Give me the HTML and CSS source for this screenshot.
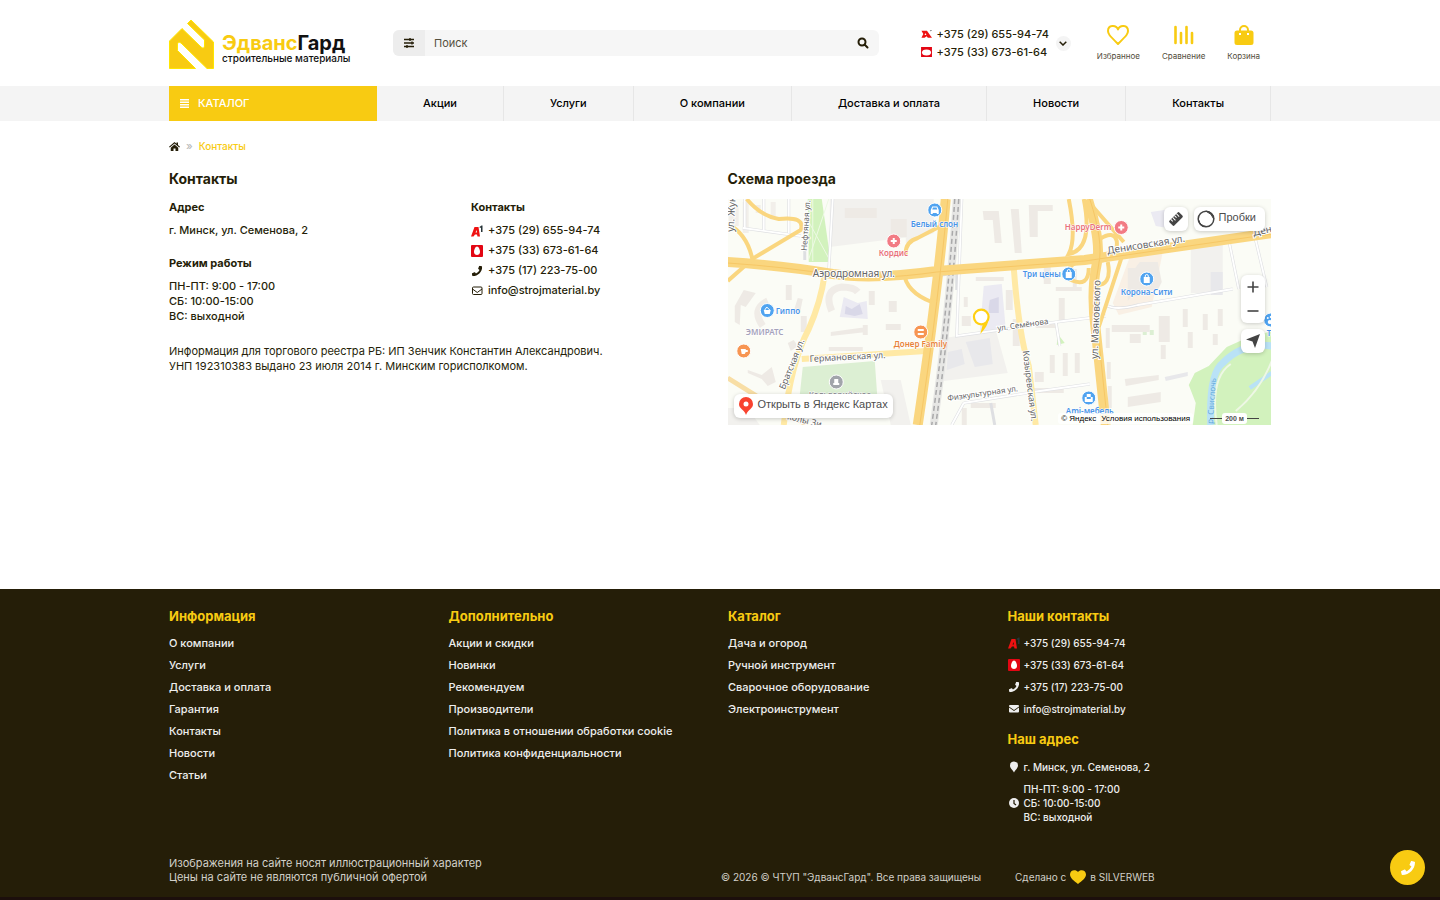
FILE: index.html
```html
<!DOCTYPE html>
<html lang="ru">
<head>
<meta charset="utf-8">
<meta name="viewport" content="width=device-width, initial-scale=1">
<title>Контакты — ЭдвансГард</title>
<link rel="stylesheet" href="styles.css">
</head>
<body>
<svg class="sprite" aria-hidden="true">
  <symbol id="phone" viewBox="0 0 512 512"><path d="M493 25l-104-24c-11-3-23 3-27 14l-48 112c-4 10-1 22 7 28l61 50a371 371 0 0 1-177 177l-50-61c-7-8-18-11-28-7L15 362c-11 4-17 16-14 27l24 104c2 11 12 19 23 19 256 0 464-207 464-464 0-11-8-21-19-23z"/></symbol>
  <symbol id="a1" viewBox="0 0 24 24"><path fill="#ee1111" fill-rule="evenodd" d="M7 4h8l3 19h-5l-1-4H8l-3 4H0L7 4zm4 6-2 5h3z"/><path class="a1-one" d="M17 4l4-3h2v13h-3V5l-2 1z"/></symbol>
  <symbol id="mts" viewBox="0 0 24 24"><rect width="24" height="24" rx="2" fill="#e30613"/><path fill="#fff" d="M12 3c3 0 6 6 6 11 0 4-3 6-6 6s-6-2-6-6c0-5 3-11 6-11z"/></symbol>
  <symbol id="bag" viewBox="0 0 20 20"><path d="M3 5.500h2V5a5 5 0 0 1 10 0v.5h2q2.500 0 2.500 2.500v9.500Q19.500 20 17 20H3Q.5 20 .5 17.500V8q0-2.500 2.500-2.500zm4 0h6V5a3 3 0 0 0-6 0zM5 8v2h2V8zm8 0v2h2V8z"/></symbol>
</svg>

<header class="header container">
  <a class="logo" href="#" aria-label="ЭдвансГард">
    <svg class="logo-mark" viewBox="0 0 45 50"><path fill="#f8cb12" stroke="#ffe600" d="M.5 22 13 9.500 32 28q3 2.500 3.500-1v-6L18.500 4.500 22 1l22.500 22v26.500h-6.500L12 24q-3-2-3.500 1v6.500l18 18H.5z"/></svg>
    <span class="logo-text"><span class="logo-name"><span>Эдванс</span>Гард</span><span class="logo-sub">строительные материалы</span></span>
  </a>
  <form class="search" role="search">
    <button class="search-filter" type="button" aria-label="Фильтр"><svg viewBox="0 0 12 12" fill="none" stroke="currentColor" stroke-width="1.400"><path d="M1 2.500h10M1 6h10M1 9.500h10M7 1v3M9 4.500v3M4 8v3"/></svg></button>
    <input type="search" placeholder="Поиск" aria-label="Поиск">
    <button class="search-go" type="submit" aria-label="Найти"><svg viewBox="0 0 12 12" fill="none" stroke="currentColor" stroke-width="2"><circle cx="5" cy="5" r="3.500"/><path d="m7.500 7.500 3 3" stroke-linecap="round"/></svg></button>
  </form>
  <div class="phones">
    <div class="phone-list">
      <a href="tel:+375296559474"><svg class="flat" viewBox="0 0 24 20"><path fill="#e11" fill-rule="evenodd" d="M1 3h12l5 7 6 8h-9l-3-3-4 3H1l4-8zM9 8l-1 4h4z"/><path fill="#444" d="m19 3 4-2v2l-2 1z"/></svg>+375 (29) 655-94-74</a>
      <a href="tel:+375336736164"><svg class="flat" viewBox="0 0 24 22"><rect width="24" height="22" fill="#e30613"/><ellipse cx="12" cy="12" rx="10" ry="6.500" fill="#fff"/></svg>+375 (33) 673-61-64</a>
    </div>
    <button class="phones-more" type="button" aria-label="Показать контакты"><svg viewBox="0 0 8 5" fill="none" stroke="currentColor" stroke-width="1.500"><path d="m.7.7 3.300 3.300L7.300.7"/></svg></button>
  </div>
  <nav class="tools" aria-label="Покупки">
    <a href="#"><svg viewBox="0 0 22 20" fill="none" stroke="#f8cb12" stroke-width="2"><path d="M11 4.500C9-.5 1-.2 1 6c0 3 1 4 10 13 9-9 10-10 10-13 0-6.200-8-6.500-10-1.500z" stroke-linejoin="round"/></svg>Избранное</a>
    <a href="#"><svg viewBox="0 0 22 20" fill="none" stroke="#f8cb12" stroke-width="2.600" stroke-linecap="round"><path d="M2.500 2v16M8 8v10M13.500 2v16M19 8v10"/></svg>Сравнение</a>
    <a href="#"><svg viewBox="0 0 20 20" fill="#f8cb12" fill-rule="evenodd"><use href="#bag"/></svg>Корзина</a>
  </nav>
</header>

<div class="menu-bar">
  <nav class="menu container" aria-label="Основное меню">
    <button class="catalog" type="button"><svg viewBox="0 0 9 9" fill="#fff"><path d="M0 0h9v1.500H0zM0 2.500h9v1.500H0zM0 5h9v1.500H0zM0 7.500h9v1.500H0z"/></svg>КАТАЛОГ</button>
    <a href="#">Акции</a><a href="#">Услуги</a><a href="#">О компании</a><a href="#">Доставка и оплата</a><a href="#">Новости</a><a href="#">Контакты</a>
  </nav>
</div>

<main class="container">
  <nav class="crumbs" aria-label="Навигация">
    <a href="#" aria-label="Главная"><svg viewBox="0 0 22 18" fill="#251e08"><path d="M11 0 0 9.500 1.500 11 11 3l9.500 8L22 9.500l-4-3.500V1h-3v2.500zM11 5l-7.500 6.300V18H9v-5h4v5h5.500v-6.700z"/></svg></a>
    <span class="sep">»</span><span>Контакты</span>
  </nav>
  <div class="columns">
    <section>
      <h1>Контакты</h1>
      <div class="details">
        <div>
          <h2>Адрес</h2>
          <p>г. Минск, ул. Семенова, 2</p>
          <h2 class="spaced">Режим работы</h2>
          <p>ПН-ПТ: 9:00 - 17:00<br>СБ: 10:00-15:00<br>ВС: выходной</p>
        </div>
        <div>
          <h2>Контакты</h2>
          <ul class="contact-list">
            <li><a href="tel:+375296559474"><svg viewBox="0 0 24 24"><use href="#a1"/></svg>+375 (29) 655-94-74</a></li>
            <li><a href="tel:+375336736164"><svg viewBox="0 0 24 24"><use href="#mts"/></svg>+375 (33) 673-61-64</a></li>
            <li><a href="tel:+375172237500"><svg viewBox="-40 -40 592 592" fill="#251e08"><use href="#phone" width="512" height="512"/></svg>+375 (17) 223-75-00</a></li>
            <li><a href="mailto:info@strojmaterial.by"><svg viewBox="0 0 24 24" fill="none" stroke="#251e08" stroke-width="2"><rect x="3" y="4" width="19" height="15" rx="2"/><path d="m3 8 9.500 7L22 8"/></svg>info@strojmaterial.by</a></li>
          </ul>
        </div>
      </div>
      <p class="legal">Информация для торгового реестра РБ: ИП Зенчик Константин Александрович.<br>УНП 192310383 выдано 23 июля 2014 г. Минским горисполкомом.</p>
    </section>
    <section>
      <h1>Схема проезда</h1>
      <div class="map">
        <svg class="map-canvas" viewBox="727 199 544 226" preserveAspectRatio="xMidYMid slice" role="img" aria-label="Карта">
          <rect x="727" y="199" width="544" height="226" fill="#fbfcf6"/>
          <g fill="#f2f1ee">
            <path d="M829 199h80v38l-80 10zM944 338l51-8 12 43-64 8zM880 380h20l10 45h-20zM727 408h20l12 17h-32zM1190 241h32v52h-32zM905 199h28v34l-28 10z"/>
            <path fill="#f9f0e5" d="M1132 249l31-2-12 60-33 8-6-12z"/>
          </g>
          <path fill="#d2f2bd" d="M807 199h14l9 63h-22z"/>
          <path fill="#dcefd3" d="M802 367l72-6 3 42-78-8zM1142 329h4v6h-4zM1149 330h4v5h-4z"/>
          <path fill="#d2f2bd" d="M1271 331v94h-79l3-22-7-18 6-12 14-7 18-19 20-9zM1057 334l7 9-8 2z"/>
          <g fill="none" stroke="#edf9e4" stroke-width="1"><path d="M812 199v62M828 199l-20 60M807 220l22 40"/></g>
          <g fill="#ebeaf2"><path d="M983 286l18-2 4 45-26 3zM843 297l14 6 9-2 1 18-28-2zM1150 212l20-3 3 20-18-3z"/><path fill="#d9d8e8" d="M989 300l9-3v16h-10v-6zM845 306l6 3 8-5 3 10-8 2-10-2z"/></g>
          <g fill="#eeeae5">
            <path d="M728 205h10v21h-10zM742 202h6v31h-6zM770 202h5v16h-5zM755 205h5v8h-5z" opacity=".7"/>
            <path d="M890 219h16v18h-16zM844 208h32v10h-32zM785 285h6v15h-6zM797 298l5 1-3 15-6-3zM800 316h6v16h-6zM787 343l6-3 4 6-7 5zM743 290l12 3-10 14-5-2-1 20-5-3v-16zM747 370l14 5 10-8 4 15-8 4-6-7-14-6z"/>
            <path d="M828 347h34v4h-34zM830 332l36-5v5l-36 4zM868 291h6v14h-6zM888 301h8v11h-8zM862 325h5v10h-5zM885 324h15v6h-15z"/>
            <path d="M982 211h16l3 32h-7l-2-23h-9zM1010 209h8l3 44h-7zM1028 205h24v6h-15v26h-8zM975 277h28v4h-28zM963 297h4v10h-4zM961 316h9v10h-9zM1005 290h7v20h-7zM1012 319h7v27h-7z"/>
            <path d="M1043 265h7v19h-7zM1055 287h26v4h-26zM1072 269h4v18h-4zM1035 323h22v5h-22zM1058 298h6v23h-6zM1049 355h5v18h-5zM1062 353h5v23h-5zM1074 353h5v20h-5zM1034 372h9v10h-9zM970 403h25v5h-25zM1030 388h33v5h-33zM961 408h5v17h-5z"/>
            <path d="M1127 268h12v28h-12zM1139 262h18l4 20-4 8h-21l-9 11v-23zM1111 325h38v7h-38zM1158 316h11v26h-11zM1129 334h11v9h-11zM1160 345h5v14h-5zM1182 309h5v18h-5zM1187 332h5v16h-5zM1202 314h5v16h-5zM1217 309h5v17h-5zM1212 334h5v11h-5zM1124 379l34-4v5l-33 6zM1127 397l33-5v10l-33 5zM1105 328h4v20h-4zM1106 362h4v17h-4zM1107 386h4v22h-4z"/>
            <path fill="#e8e8eb" d="M1210 272h12v23h-12zM1164 377l23-5v4l-22 5zM947 352l14-3 3 15-18 6zM965 342l24-4 3 26-18 3z"/>
          </g>
          <g fill="none" stroke="#f0ece7" stroke-width="7"><path d="M762 326q-12-17 5-25M831 311q-9-21 10-24 12 0 16 5"/></g>
          <g fill="none" stroke="#dedfe2" stroke-width="3"><path d="M832 199l-4 72M742 228l58 8M744 199v29M763 199v31M788 199v34M804 236v24M961 199l-5 137 107-15 42-5M956 290v-17l-23 3M1055 321l4 25M963 403l-12 22M963 403l76-12 50-7M990 403l4 22M1105 305q10 6 32 0l95-16M1228 240l10 49M1253 232l13 55"/></g>
          <g fill="none" stroke="#fff" stroke-width="1.800"><path d="M832 199l-4 72M742 228l58 8M744 199v29M763 199v31M788 199v34M961 199l-5 137 107-15 42-5M1055 321l4 25M963 403l76-12 50-7M963 403l-12 22M1105 305q10 6 32 0l95-16M1228 240l10 49M1253 232l13 55"/></g>
          <g fill="none" stroke="#ffe9a5" stroke-width="6"><path d="M824 274q-4 28-16 55-18 34-25 96M801 359l124-8M1013 268q5 66 15 98l7 59" /><path d="M727 378l40 25 40 22" stroke="#f8dea5" stroke-width="5"/></g>
          <path d="M956 199q-7 110-23 226" fill="none" stroke="#e6e6e4" stroke-width="8"/><path d="M954 199q-7 110-23 226M958 199q-7 110-23 226" fill="none" stroke="#a9a9aa" stroke-width="1.500" stroke-dasharray="5 3"/>
          <g fill="none" stroke="#fad67f" stroke-width="10"><path d="M727 262q60 4 105 12 40 6 104-3l148-11 187-27M945 199q-8 92-28 226M1087 199q14 43 9 65-6 28-1 66l10 95"/></g>
          <g fill="none" stroke="#fad67f" stroke-width="4"><path d="M727 224q20 10 25 37M727 281l26-23 47-28q5-14-22-11-18-3-32-20M905 255q-1-13 12-17l23-12M903 272q2 20 28 30M1068 199q8 40 0 55 25-5 15-55M1084 260q-22 4-14 20 18 8 18-12M1096 261q22-1 20-20-3-11-17-2M1107 262q5 25-14 23M1121 257l-23 70M1088 202l35 40"/></g>
          <g fill="none" stroke="#f6c766" stroke-width="1"><path d="M727 263q60 4 105 12 40 6 104-3l148-11 187-27M947 199q-8 92-28 226M1089 199q14 43 9 65-6 28-1 66l10 95"/></g>
          <g fill="none" stroke="#b9e2f6" stroke-width="7"><path d="M1271 346q-28-4-49 17-14 10-12 62"/><path stroke-width="4" d="M1271 373l-22 15"/><path stroke="#eef7e5" stroke-width="2" d="M1271 361q-12 30-36 50M1216 425q-7-47 14-61"/></g>
          <g class="road-labels" font-size="9">
            <text font-size="10" transform="translate(733 232) rotate(-87)">ул. Жук</text><text font-size="8" transform="translate(806 251) rotate(-86)">Нефтяная ул.</text>
            <text x="812" y="277" font-size="10">Аэродромная ул.</text><text transform="translate(784 390) rotate(-68)">Братская ул.</text>
            <text transform="translate(809 362) rotate(-3)">Германовская ул.</text><text font-size="8" transform="translate(997 331) rotate(-8)">ул. Семёнова</text>
            <text font-size="8" transform="translate(947 401) rotate(-8)">Физкультурная ул.</text><text font-size="9" transform="translate(1022 351) rotate(83)">Козыревская ул.</text>
            <text font-size="10" transform="translate(1097 359) rotate(-88)">ул. Маяковского</text><text font-size="10" transform="translate(1107 254) rotate(-9)">Денисовская ул.</text>
            <text font-size="10" transform="translate(1253 236) rotate(-12)">Ден</text><text transform="translate(786 419) rotate(14)">колы Зи</text>
            <text class="river" font-size="8" transform="translate(1212 424) rotate(-86)">р. Свислочь</text>
          </g>
          <g class="places" font-size="8">
            <g fill="#4a94e8"><text x="910" y="227">Белый слон</text><text x="775" y="314">Гиппо</text><text x="1022" y="277">Три цены</text><text x="1120" y="295">Корона-Сити</text><text x="1065" y="414">Ami-мебель</text><text x="1266" y="336">Та</text></g>
            <g fill="#e9727a"><text x="878" y="256">Кордис</text><text x="1064" y="230">HappyDerm</text></g>
            <text x="893" y="347" fill="#e8833a">Донер Family</text><text x="745" y="335" fill="#a5a2bb">ЭМИРАТС</text><text x="808" y="398" fill="#939399">Кальварийское</text>
          </g>
          <g stroke="#fff"><g fill="#4fa3f0"><circle cx="934" cy="210" r="7"/><circle cx="766.500" cy="310.500" r="7"/><circle cx="1068" cy="274" r="7"/><circle cx="1146" cy="279" r="7"/><circle cx="1088" cy="398" r="7"/><circle cx="1270" cy="320" r="7"/></g><g fill="#f27b84"><circle cx="893" cy="241" r="7"/><circle cx="1120.500" cy="227.500" r="7"/></g><g fill="#f79552"><circle cx="920" cy="332" r="7"/><circle cx="743" cy="351" r="7"/></g><circle cx="835.500" cy="382" r="7" fill="#a2a5ab"/></g>
          <g fill="#fff"><path d="M892 238h2v2h2v2h-2v2h-2v-2h-2v-2h2zM1119.500 224.500h2v2h2v2h-2v2h-2v-2h-2v-2h2zM930 210l1.500-3.500h5L938 210v4h-2v-1h-4v1h-2zM763 310h7l-1 4h-5zM1065 272h6v6h-6zM1143 277h6v6h-6zM833.500 379h4v4h1v2h-6v-2h1zM740 349h5v1h2v2h-2l-1 2h-3zM917 329h6v2h-6zM917 333h6v2h-6zM1084 397h2v2h4v-2h2v5h-8zM1086 394h4v3h-4z"/><circle cx="1267" cy="318" r="1"/><circle cx="1270" cy="317" r="1"/><circle cx="1269" cy="322" r="2"/></g>
          <path d="M931.500 209.500h5l-.7-2h-3.600z" fill="#4fa3f0"/>
          <g fill="none" stroke="#fff"><path d="m764 310 2-3 3 3M1066.500 272v-1a1.500 1.500 0 0 1 3 0v1M1144.500 277v-1a1.500 1.500 0 0 1 3 0v1"/></g>
          <path d="M980.500 310a7.300 7.300 0 1 0 1.500 14.500L979.500 334c5-5 8-10 8.500-16a7.300 7.300 0 0 0-7.500-8z" fill="#ffd012"/><circle cx="980.500" cy="317" r="7.300" fill="#fff" stroke="#ffd012" stroke-width="2.200"/>
        </svg>
        <div class="map-top">
          <button class="map-btn" type="button" aria-label="Измерение расстояний"><svg viewBox="0 0 16 16"><g transform="rotate(-45 8 8)"><rect x="1" y="4.500" width="14" height="7" rx="1.500" fill="#444"/><path d="M4 4.500v3M6.700 4.500v4M9.300 4.500v3M12 4.500v4" stroke="#fff"/></g></svg></button>
          <button class="map-btn wide" type="button"><svg viewBox="0 0 18 18" fill="none" stroke="#444"><circle cx="9" cy="9" r="7.800" stroke-width="1.500"/><path d="M9 1.200a7.800 7.800 0 0 1 7.800 7.800q-2-5.500-7.800-7.800zM1.500 10q2 6 8 6.500-6 1-8-6.500z" fill="#444"/></svg>Пробки</button>
        </div>
        <div class="map-side">
          <div class="zoom"><button type="button" aria-label="Приблизить"><svg viewBox="0 0 12 12"><path d="M6 .5v11M.5 6h11" stroke="#444" stroke-width="1.600"/></svg></button><button type="button" aria-label="Отдалить"><svg viewBox="0 0 12 12"><path d="M.5 6h11" stroke="#444" stroke-width="1.600"/></svg></button></div>
          <button class="map-btn" type="button" aria-label="Моё местоположение"><svg viewBox="0 0 16 16"><path d="M15 1 10 15 7.500 8.500 1 6.500z" fill="#444"/></svg></button>
        </div>
        <a class="map-btn map-open" href="#"><svg viewBox="0 0 14 18"><path d="M7 0a7 7 0 0 0-7 7c0 5 5 5 7 11 2-6 7-6 7-11a7 7 0 0 0-7-7z" fill="#f8432f"/><circle cx="7" cy="7" r="2.500" fill="#fff"/></svg><span>Открыть в Яндекс Картах</span></a>
        <div class="map-copy"><span>© Яндекс</span><a href="#">Условия использования</a></div>
        <div class="map-scale"><span>200 м</span></div>
      </div>
    </section>
  </div>
</main>

<footer class="footer">
  <div class="container">
    <div class="footer-grid">
      <section><h2>Информация</h2><ul><li><a href="#">О компании</a></li><li><a href="#">Услуги</a></li><li><a href="#">Доставка и оплата</a></li><li><a href="#">Гарантия</a></li><li><a href="#">Контакты</a></li><li><a href="#">Новости</a></li><li><a href="#">Статьи</a></li></ul></section>
      <section><h2>Дополнительно</h2><ul><li><a href="#">Акции и скидки</a></li><li><a href="#">Новинки</a></li><li><a href="#">Рекомендуем</a></li><li><a href="#">Производители</a></li><li><a href="#">Политика в отношении обработки cookie</a></li><li><a href="#">Политика конфиденциальности</a></li></ul></section>
      <section><h2>Каталог</h2><ul><li><a href="#">Дача и огород</a></li><li><a href="#">Ручной инструмент</a></li><li><a href="#">Сварочное оборудование</a></li><li><a href="#">Электроинструмент</a></li></ul></section>
      <section>
        <h2>Наши контакты</h2>
        <ul class="with-icons">
          <li><a href="tel:+375296559474"><svg viewBox="0 0 24 24"><use href="#a1"/></svg>+375 (29) 655-94-74</a></li>
          <li><a href="tel:+375336736164"><svg viewBox="0 0 24 24"><use href="#mts"/></svg>+375 (33) 673-61-64</a></li>
          <li><a href="tel:+375172237500"><svg viewBox="-40 -40 592 592" fill="#eee"><use href="#phone" width="512" height="512"/></svg>+375 (17) 223-75-00</a></li>
          <li><a href="mailto:info@strojmaterial.by"><svg viewBox="0 0 24 24" fill="#eee"><path d="M2 6q0-2 2-2h16q2 0 2 2v1l-10 7L2 7zM2 9l10 7 10-7v8q0 2-2 2H4q-2 0-2-2z"/></svg>info@strojmaterial.by</a></li>
        </ul>
        <h2 class="address-title">Наш адрес</h2>
        <ul class="with-icons">
          <li><span><svg viewBox="0 0 24 24" fill="#eee"><path d="M12 1a8 8 0 0 0-8 8c0 5 4 7 8 14 4-7 8-9 8-14a8 8 0 0 0-8-8z"/></svg>г. Минск, ул. Семенова, 2</span></li>
          <li class="hours"><span><svg viewBox="0 0 24 24"><circle cx="12" cy="12" r="10" fill="#eee"/><path d="M12 6v7l4 3" fill="none" stroke="#251e08" stroke-width="2.500"/></svg><span>ПН-ПТ: 9:00 - 17:00<br>СБ: 10:00-15:00<br>ВС: выходной</span></span></li>
        </ul>
      </section>
    </div>
    <div class="footer-bottom">
      <p class="note">Изображения на сайте носят иллюстрационный характер<br>Цены на сайте не являются публичной офертой</p>
      <p class="rights">© 2026 © ЧТУП "ЭдвансГард". Все права защищены</p>
      <p class="made">Сделано с <svg viewBox="0 0 16 14" fill="#f8cb12"><path d="M8 2C6-1 0-.5 0 4.500 0 8 4 11 8 14c4-3 8-6 8-9.500C16-.5 10-1 8 2z"/></svg> в SILVERWEB</p>
    </div>
  </div>
</footer>
<button class="call" type="button" aria-label="Позвонить"><svg viewBox="0 0 512 512" fill="#fff"><use href="#phone"/></svg></button>
</body>
</html>
```
FILE: styles.css
```css
* { box-sizing: border-box; }
body {
  margin: 0;
  min-height: 100vh;
  display: flex;
  flex-direction: column;
  font: 500 11px/15px Inter, "Noto Sans", sans-serif;
  color: #251e08;
  background: #fff;
}
a { color: inherit; text-decoration: none; }
button { font: inherit; color: inherit; border: 0; padding: 0; background: none; cursor: pointer; }
h1, h2, p, ul { margin: 0; padding: 0; }
ul { list-style: none; }
svg { display: block; flex: none; }
.sprite { position: absolute; width: 0; height: 0; }
.a1-one { fill: #273438; }
.container { width: 100%; max-width: 1134px; margin: 0 auto; padding: 0 16px; }

.header { display: flex; align-items: center; height: 86px; }
.logo { display: flex; align-items: center; gap: 8px; width: 224px; padding-top: 2px; }
.logo-mark { width: 45px; height: 50px; }
.logo-text { display: flex; flex-direction: column; padding-top: 7px; }
.logo-name { font: 700 20px/20px Inter, sans-serif; color: #111; }
.logo-name span { color: #f8cb12; }
.logo-sub { font: 500 10px/10px Inter, sans-serif; color: #111; }
.search { flex: 1; display: flex; height: 26px; border-radius: 6px; background: #f6f6f6; overflow: hidden; }
.search-filter { width: 32px; background: #ededed; display: grid; place-items: center; }
.search-filter svg, .search-go svg { width: 12px; height: 12px; }
.search input { flex: 1; min-width: 0; border: 0; background: none; outline: 0; padding: 0 9px; font: inherit; font-weight: 400; color: inherit; }
.search input::placeholder { color: #55503f; opacity: 1; }
.search-go { width: 32px; display: grid; place-items: center; }
.phones { display: flex; align-items: center; gap: 7px; margin-left: 42px; }
.phone-list { display: grid; line-height: 18px; }
.phone-list a { display: flex; align-items: center; gap: 5px; }
.flat { width: 11px; height: 10px; }
.phones-more { width: 15px; height: 15px; border-radius: 50%; background: #f4f4f4; display: grid; place-items: center; }
.phones-more svg { width: 8px; height: 5px; }
.tools { display: flex; gap: 22px; margin: 0 11px 0 26px; font-size: 8px; line-height: 10px; font-weight: 400; color: #514b39; }
.tools a { display: flex; flex-direction: column; align-items: center; gap: 6px; }
.tools svg { width: 22px; height: 20px; }

.menu-bar { background: #f4f4f4; }
.menu { display: flex; height: 35px; color: #000; }
.menu a { flex: 1 1 auto; display: grid; place-items: center; border-right: 1px solid #e6e6e6; }
.catalog { width: 208px; padding-left: 11px; display: flex; align-items: center; gap: 9px; background: #f8cb12; color: #fff; }
.catalog svg { width: 9px; height: 9px; }

main { flex: 1; }
.crumbs { display: flex; align-items: center; gap: 6px; padding-top: 18px; font-size: 10px; color: #f8cb12; }
.crumbs svg { width: 11px; height: 9px; }
.crumbs .sep { color: #bbb; font-size: 11px; }
.columns { display: grid; grid-template-columns: 1fr 1fr; gap: 15px; padding: 15px 0 24px; }
h1 { font-size: 14px; line-height: 20px; font-weight: 700; }
.details { display: grid; grid-template-columns: 5fr 4fr; padding-top: 11px; }
.details h2 { font-size: 11px; line-height: 15px; font-weight: 700; margin-bottom: 8px; }
.details .spaced { margin-top: 18px; }
.contact-list { display: grid; gap: 5px; }
.contact-list a { display: flex; align-items: center; gap: 5px; }
.contact-list svg, .with-icons svg { width: 12px; height: 12px; }
.legal { padding-top: 20px; font-weight: 400; }

.map { position: relative; height: 226px; margin-top: 10px; overflow: hidden; font-family: "Liberation Sans", Arial, sans-serif; font-weight: 400; color: #4d4d4d; }
.map-canvas { width: 100%; height: 100%; }
.road-labels { font-family: "Noto Sans", sans-serif; fill: #666; stroke: #fff; stroke-width: 2px; paint-order: stroke; }
.river { fill: #6ad; stroke: none; }
.places { font-family: "Noto Sans", sans-serif; font-weight: 600; stroke: #fff; stroke-width: 1px; paint-order: stroke; }
.map-btn { height: 24px; min-width: 24px; border-radius: 6px; background: #fff; box-shadow: 0 1px 4px #0003; display: flex; align-items: center; justify-content: center; }
.map-btn svg { width: 16px; height: 16px; }
.map-top { position: absolute; top: 8px; right: 6px; display: flex; gap: 6px; line-height: 11px; }
.map-top .wide { padding: 0 9px 4px 3px; gap: 4px; }
.map-top .wide svg { width: 18px; height: 18px; margin-top: 4px; }
.map-side { position: absolute; top: 76px; right: 6px; display: grid; gap: 6px; }
.zoom { width: 24px; border-radius: 6px; background: #fff; box-shadow: 0 1px 4px #0003; display: grid; }
.zoom button { height: 24px; display: grid; place-items: center; }
.zoom svg { width: 12px; height: 12px; }
.map-open { position: absolute; left: 6px; bottom: 7px; padding: 0 5px; gap: 5px; }
.map-open svg { width: 14px; height: 18px; }
.map-open span { padding-bottom: 4px; }
.map-copy { position: absolute; right: 78px; bottom: 1px; display: flex; gap: 5px; padding: 0 3px; font-size: 8px; line-height: 11px; color: #000; background: #fffc; border-radius: 3px; }
.map-scale { position: absolute; right: 12px; bottom: 1px; display: flex; align-items: center; font-size: 7px; line-height: 11px; font-weight: 700; }
.map-scale span { background: #fff; border-radius: 3px; padding: 0 3px; }
.map-scale::before, .map-scale::after { content: ""; width: 12px; height: 1px; background: #444; }

.footer { background: #251e08; color: #eee; border-bottom: 3px solid #1c0f0c; }
.footer-grid { display: grid; grid-template-columns: repeat(4, 1fr); gap: 16px; padding-top: 17px; }
.footer h2 { font-size: 13px; line-height: 20px; font-weight: 700; color: #f8cb12; margin-bottom: 6px; }
.footer li { line-height: 22px; }
.footer .a1-one { fill: #38434a; }
.with-icons { font-size: 10px; }
.with-icons li > * { display: flex; align-items: center; gap: 4px; }
.footer .address-title { margin-top: 9px; margin-bottom: 7px; }
.footer .hours { line-height: 14px; padding-top: 4px; }
.footer-bottom { display: grid; grid-template-columns: 552px auto 1fr; align-items: end; padding: 32px 0 13px; font-size: 10px; line-height: 14px; font-weight: 400; color: #d2d0c9; }
.note { font-size: 11px; }
.made { display: flex; align-items: center; gap: 4px; margin-left: 34px; }
.made svg { width: 16px; height: 14px; }
.call { position: fixed; right: 15px; bottom: 15px; width: 35px; height: 35px; border-radius: 50%; background: #f8cb12; display: grid; place-items: center; }
.call svg { width: 14px; height: 14px; }
```
